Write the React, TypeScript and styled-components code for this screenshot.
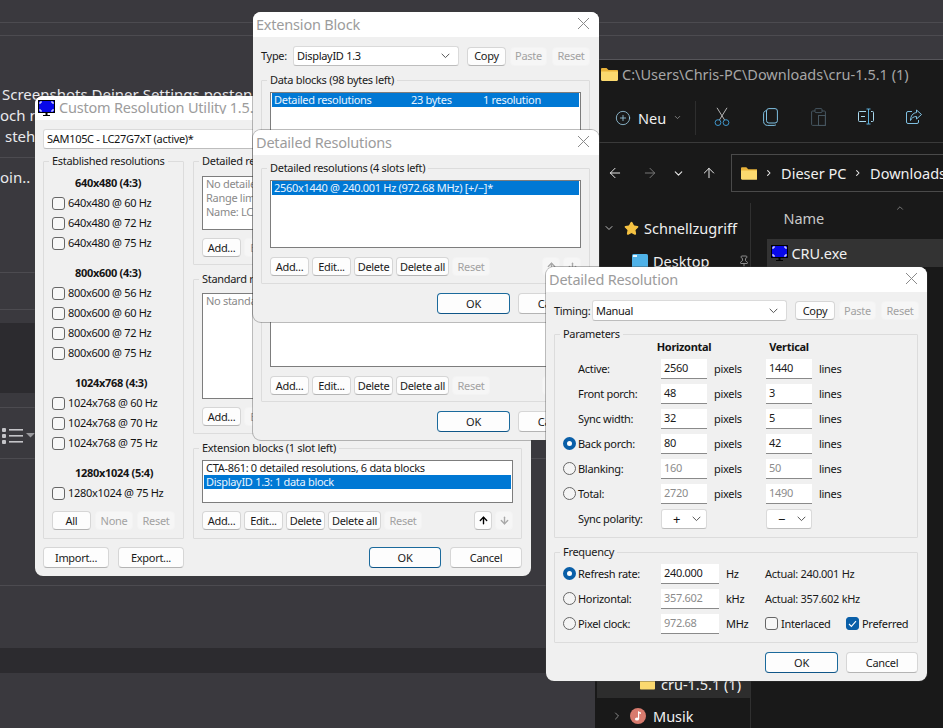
import React from "react";
import styled, { createGlobalStyle } from "styled-components";
import {
  ArrowLeft,
  ArrowRight,
  ArrowUp,
  ArrowDown,
  ChevronDown,
  ChevronRight,
  ChevronUp,
  CirclePlus,
  Pin,
  Star,
} from "lucide-react";

const UI_FONT = `"Noto Sans", "Open Sans", sans-serif`;

const GlobalStyle = createGlobalStyle`
  * { box-sizing: border-box; }
  html, body { margin: 0; padding: 0; background: #3a393e; }
  body { font-family: ${UI_FONT}; }
`;

const MonitorIcon = () => (
  <svg width="17" height="16" viewBox="0 0 17 16">
    <rect x="0.5" y="0.5" width="16" height="12" fill="#0808e8" stroke="#000" />
    <path d="M2 4V2h2M13 2h2v2M2 9v2h2M13 11h2V9" fill="none" stroke="#fff" strokeWidth="1" />
    <rect x="7.5" y="13" width="2" height="2" fill="#000" />
    <rect x="5" y="15" width="7" height="1" fill="#000" />
  </svg>
);

const FolderIcon = ({ w = 17 }: { w?: number }) => (
  <svg width={w} height={(w * 13) / 17} viewBox="0 0 17 13">
    <path d="M0 1.2C0 .5.5 0 1.2 0h4.3l2 2H16c.6 0 1 .4 1 1v1H0z" fill="#e8b23a" />
    <path d="M0 3.4h17v8.4c0 .7-.5 1.2-1.2 1.2H1.2C.5 13 0 12.5 0 11.8z" fill="#fbd96f" />
  </svg>
);

const ListIcon = () => (
  <svg width="34" height="17" viewBox="0 0 34 17">
    <g fill="#c4c4c8">
      <rect x="1" y="1" width="4" height="4" rx="1" />
      <rect x="1" y="7" width="4" height="4" rx="1" />
      <rect x="1" y="13" width="4" height="4" rx="1" />
      <rect x="8" y="2" width="14" height="1.6" />
      <rect x="8" y="8" width="14" height="1.6" />
      <rect x="8" y="14" width="14" height="1.6" />
    </g>
    <path d="M25 6h9l-4.5 4.5z" fill="#98989c" />
  </svg>
);

const SelectChevron = () => (
  <svg width="9" height="6" viewBox="0 0 9 6">
    <path d="M.7.8 4.5 4.6 8.3.8" fill="none" stroke="#555" strokeWidth="1" />
  </svg>
);

const CloseIcon = () => (
  <svg width="13" height="13" viewBox="0 0 13 13">
    <path d="M1 1l11 11M12 1 1 12" stroke="#8a8a8a" strokeWidth="1" fill="none" />
  </svg>
);

const ScissorsIcon = () => (
  <svg width="16" height="20" viewBox="0 0 16 20" fill="none" strokeWidth="1">
    <path d="M3 .8 10.6 13M13 .8 5.4 13" stroke="#b4b4b4" />
    <circle cx="4" cy="15.6" r="2.9" stroke="#3f97cc" />
    <circle cx="12" cy="15.6" r="2.9" stroke="#3f97cc" />
  </svg>
);

const CopyIcon = () => (
  <svg width="15" height="18" viewBox="0 0 15 18" fill="none" stroke="#7fc0e2" strokeWidth="1">
    <rect x="3.5" y="0.6" width="10.9" height="14.4" rx="2.4" />
    <path d="M3.4 2.6C1.6 3 .6 4 .6 5.8v7.6c0 2.4 1.6 4 4 4h6.6c.8 0 1.4-.3 1.8-.8" />
  </svg>
);

const PasteIcon = () => (
  <svg width="15" height="18" viewBox="0 0 15 18" fill="none" stroke="#465660" strokeWidth="1">
    <path d="M4 3H1.6a1 1 0 0 0-1 1v12.4a1 1 0 0 0 1 1h11.8a1 1 0 0 0 1-1V4a1 1 0 0 0-1-1H11" />
    <rect x="4" y="0.6" width="7" height="4" rx="1" />
    <rect x="7.5" y="7.5" width="6.9" height="10" />
  </svg>
);

const RenameIcon = () => (
  <svg width="18" height="18" viewBox="0 0 18 18" fill="none" stroke="#a8d8ee" strokeWidth="1">
    <path d="M9 3.5H2.5a1 1 0 0 0-1 1v8a1 1 0 0 0 1 1H9" />
    <path d="M14 3.5h1.5a1 1 0 0 1 1 1v8a1 1 0 0 1-1 1H14" />
    <path d="M11.5 1v15M9.5 1h4M9.5 16h4" stroke="#5cb0dc" />
    <path d="M4 8.5h4" />
  </svg>
);

const ShareIcon = () => (
  <svg width="18" height="18" viewBox="0 0 18 18" fill="none" stroke="#7fc0e2" strokeWidth="1">
    <path d="M7 3.5H3a1.5 1.5 0 0 0-1.5 1.5v9A1.5 1.5 0 0 0 3 15.5h9a1.5 1.5 0 0 0 1.5-1.5v-2" />
    <path d="M11.5 2 16.5 6.5 11.5 11V8.5C8.5 8.5 6.5 10 5.5 12.5 5.5 8 8 4.8 11.5 4.6z" />
  </svg>
);

const DesktopIcon = () => (
  <svg width="16" height="14" viewBox="0 0 16 14">
    <rect width="16" height="14" rx="1.5" fill="#4fb2e8" />
    <rect x="1" y="1" width="4" height="2" fill="#e4f6ff" />
  </svg>
);

const MusicIcon = () => (
  <svg width="16" height="16" viewBox="0 0 16 16">
    <circle cx="8" cy="8" r="8" fill="#d87b6e" />
    <rect x="8" y="3.5" width="1.2" height="7.5" fill="#fff" />
    <path d="M8 3.5l3 1v1.6L8 5z" fill="#fff" />
    <ellipse cx="7" cy="11" rx="2.1" ry="1.6" fill="#fff" />
  </svg>
);

const Desktop = styled.div`
  position: relative;
  width: 943px;
  height: 728px;
  overflow: hidden;
  background: #3a393e;
  color: #141414;
`;

/* forum page behind the windows */
const ForumPage = styled.div`
  display: flex;
  flex-direction: column;
  width: 100%;
  height: 100%;
  color: #e9e9ec;
`;

const ForumRow = styled.div<{ $h: number; $dark?: boolean; $line?: boolean }>`
  flex: none;
  height: ${(p) => p.$h}px;
  background: ${(p) => (p.$dark ? "#2c2b2f" : "transparent")};
  border-bottom: ${(p) => (p.$line ? "1px solid #4c4b50" : "none")};
`;

const ForumText = styled.div`
  padding-top: 48px;
  font-size: 15px;
  line-height: 21px;
`;

const ForumLine = styled.div<{ $x: number; $gap?: number }>`
  padding-left: ${(p) => p.$x}px;
  margin-top: ${(p) => p.$gap ?? 0}px;
  white-space: nowrap;
`;

const ForumTools = styled.div`
  display: flex;
  align-items: center;
  height: 100%;
  padding: 5px 0 0 1px;
`;

/* explorer window */
const Explorer = styled.div`
  position: absolute;
  left: 595px;
  top: 59px;
  width: 348px;
  height: 669px;
  display: flex;
  flex-direction: column;
  background: #191919;
  border-top: 1px solid #56555a;
  color: #f0f0f0;
  font-size: 14.5px;
`;

const ExplorerTitle = styled.div`
  display: flex;
  align-items: center;
  gap: 4px;
  height: 28px;
  padding-left: 6px;
  color: #a6a6a6;
  white-space: nowrap;
`;

const Toolbar = styled.div`
  display: flex;
  align-items: center;
  height: 55px;
  padding: 5px 0 0 20px;
  border-bottom: 1px solid #3a3a3a;
`;

const NewButton = styled.div`
  display: flex;
  align-items: center;
  gap: 7px;
  width: 81px;
  height: 34px;
  margin-right: 2px;
  border-right: 1px solid #2e2e2e;
`;

const ToolIcon = styled.div`
  display: flex;
  justify-content: center;
  width: 48px;
  margin-top: -2px;
`;

const NavBar = styled.div`
  display: flex;
  align-items: center;
  height: 60px;
  padding-left: 12px;
`;

const NavIcon = styled.div<{ $dim?: boolean; $w: number }>`
  display: flex;
  width: ${(p) => p.$w}px;
  color: ${(p) => (p.$dim ? "#777" : "#e8e8e8")};
`;

const AddressBox = styled.div`
  display: flex;
  align-items: center;
  gap: 7px;
  flex: 1;
  height: 38px;
  margin-right: -4px;
  padding-left: 9px;
  border: 1px solid #4a4a4a;
  white-space: nowrap;
  overflow: hidden;
`;

const ExplorerMain = styled.div`
  display: flex;
  flex: 1;
  min-height: 0;
`;

const Sidebar = styled.div`
  display: flex;
  flex-direction: column;
  justify-content: space-between;
  width: 157px;
  padding: 11px 0 0 2px;
  margin-bottom: -2px;
  border-right: 1px solid #303030;
`;

const SideGroup = styled.div<{ $gap: number }>`
  display: flex;
  flex-direction: column;
  gap: ${(p) => p.$gap}px;
`;

const SideItem = styled.div<{ $x: number; $gap?: number; $active?: boolean }>`
  display: flex;
  align-items: center;
  gap: ${(p) => p.$gap ?? 5}px;
  height: 28px;
  padding-left: ${(p) => p.$x}px;
  background: ${(p) => (p.$active ? "#2d2d2d" : "transparent")};
  white-space: nowrap;
`;

const StarIcon = styled(Star)`
  margin-left: 4px;
  fill: #f5c242;
  color: #f5c242;
`;

const PinIcon = styled(Pin)`
  margin-left: 24px;
  color: #8a8a8a;
`;

const FileList = styled.div`
  flex: 1;
  padding-left: 16px;
`;

const SortCaret = styled.div`
  display: flex;
  justify-content: center;
  width: 266px;
  height: 3px;
  color: #8a8a8a;
`;

const NameHeader = styled.div`
  height: 25px;
  padding-left: 16px;
  line-height: 25px;
  color: #c8c8c8;
`;

const FileRow = styled.div`
  display: flex;
  align-items: center;
  gap: 3px;
  height: 28px;
  margin-top: 8px;
  padding-left: 4px;
  background: #333;
`;

/* win32 dialog parts */
const Win = styled.div<{ $x: number; $y: number; $w: number; $z: number }>`
  position: absolute;
  left: ${(p) => p.$x}px;
  top: ${(p) => p.$y}px;
  width: ${(p) => p.$w}px;
  z-index: ${(p) => p.$z};
  display: flex;
  flex-direction: column;
  border-radius: 8px;
  background: #f0f0f0;
  box-shadow: 0 0 0 1px rgba(60, 60, 60, 0.35);
  overflow: hidden;
  font-size: 11px;
  line-height: 14px;
  letter-spacing: -0.3px;
`;

const TitleBar = styled.div<{ $h?: number }>`
  display: flex;
  align-items: center;
  height: ${(p) => p.$h ?? 25}px;
  padding: 0 9px 2px 3px;
  background: #fff;
  color: #9c9c9c;
  font-size: 14.5px;
  letter-spacing: -0.2px;
  white-space: nowrap;
`;

const TitleIcon = styled.div`
  display: flex;
  margin: 2px 4px 0 0;
`;

const TitleText = styled.div`
  flex: 1;
  overflow: hidden;
`;

const Body = styled.div<{ $top: number }>`
  display: flex;
  flex-direction: column;
  padding: ${(p) => p.$top}px 9px 8px 8px;
`;

const Row = styled.div<{ $top?: number; $gap?: number }>`
  display: flex;
  align-items: center;
  gap: ${(p) => p.$gap ?? 4}px;
  margin-top: ${(p) => p.$top ?? 0}px;
`;

const Columns = styled.div`
  display: flex;
  gap: 9px;
  margin-top: 5px;
`;

const Stack = styled.div`
  display: flex;
  flex-direction: column;
  flex: 1;
  min-width: 0;
  gap: 6px;
`;

const Group = styled.fieldset<{ $w?: number; $pad?: string; $top?: number }>`
  width: ${(p) => (p.$w ? `${p.$w}px` : "auto")};
  min-width: 0;
  margin: ${(p) => p.$top ?? 0}px 0 0;
  padding: ${(p) => p.$pad ?? "7px 8px 7px 8px"};
  border: 1px solid #dcdcdc;
  border-radius: 1px;
`;

const Legend = styled.legend`
  margin-left: -3px;
  padding: 0 3px;
  font-size: 11px;
  line-height: 14px;
  color: #1a1a1a;
  white-space: nowrap;
`;

const Label = styled.div<{ $w?: number }>`
  flex: none;
  width: ${(p) => (p.$w ? `${p.$w}px` : "auto")};
  color: #1a1a1a;
  white-space: nowrap;
`;

const Btn = styled.button<{ $w: number; $h?: number; $primary?: boolean; $ml?: number }>`
  flex: none;
  width: ${(p) => p.$w}px;
  height: ${(p) => p.$h ?? 19}px;
  margin-left: ${(p) => p.$ml ?? 0}px;
  padding: 0;
  font: inherit;
  letter-spacing: inherit;
  color: #1a1a1a;
  background: #fdfdfd;
  border: 1px solid ${(p) => (p.$primary ? "#1b6a9c" : "#d6d6d6")};
  border-bottom-color: ${(p) => (p.$primary ? "#0f5688" : "#b4b4b4")};
  border-radius: 4px;

  &:disabled {
    color: #a2a2a2;
    background: #f6f6f6;
    border-color: #f3f3f3;
  }
`;

const ArrowBtn = styled(Btn)`
  display: flex;
  align-items: center;
  justify-content: center;
`;

const RowEnd = styled.div<{ $gap?: number }>`
  margin-left: auto;
  display: flex;
  gap: ${(p) => p.$gap ?? 3}px;
`;

const Combo = styled.div<{ $w: number; $h?: number }>`
  display: flex;
  align-items: center;
  justify-content: space-between;
  flex: none;
  width: ${(p) => p.$w}px;
  height: ${(p) => p.$h ?? 20}px;
  padding: 0 8px 0 3px;
  background: #fff;
  border: 1px solid #dadada;
  border-bottom-color: #bdbdbd;
  border-radius: 3px;
  white-space: nowrap;
`;

const ListBox = styled.div<{ $h: number }>`
  height: ${(p) => p.$h}px;
  padding: 0 1px;
  background: #fff;
  border: 1px solid #7d7d7d;
  overflow: hidden;
  white-space: nowrap;
`;

const ListItem = styled.div<{ $selected?: boolean; $dim?: boolean }>`
  display: flex;
  height: 14px;
  padding-left: 2px;
  line-height: 14px;
  background: ${(p) => (p.$selected ? "#0078d4" : "transparent")};
  color: ${(p) => (p.$selected ? "#e8f4ff" : p.$dim ? "#8a8a8a" : "#1a1a1a")};
`;

const ListCell = styled.div<{ $w: number }>`
  width: ${(p) => p.$w}px;
`;

const ResHeading = styled.div<{ $top?: number }>`
  height: 20px;
  margin-top: ${(p) => p.$top ?? 0}px;
  padding-left: 23px;
  line-height: 20px;
  font-weight: 700;
  white-space: nowrap;
`;

const CheckRow = styled.div<{ $w?: number }>`
  display: flex;
  align-items: center;
  gap: 3px;
  height: 20px;
  flex: none;
  width: ${(p) => (p.$w ? `${p.$w}px` : "auto")};
  white-space: nowrap;
`;

const CheckBox = styled.span<{ $on?: boolean }>`
  display: inline-flex;
  align-items: center;
  justify-content: center;
  flex: none;
  width: 13px;
  height: 13px;
  background: ${(p) => (p.$on ? "#0a5fa8" : "#f7f7f7")};
  border: 1px solid ${(p) => (p.$on ? "#0a5fa8" : "#666")};
  border-radius: 3px;
`;

const Radio = styled.span<{ $on?: boolean }>`
  display: inline-block;
  flex: none;
  width: 13px;
  height: 13px;
  border-radius: 50%;
  background: ${(p) => (p.$on ? "#fff" : "#f4f4f4")};
  border: ${(p) => (p.$on ? "4px solid #0a5fa8" : "1px solid #666")};
`;

const ParamGrid = styled.div`
  display: grid;
  grid-template-columns: 98px 46px 59px 46px 1fr;
  grid-auto-rows: 25px;
  align-items: center;
`;

const FreqGrid = styled.div`
  display: grid;
  grid-template-columns: 98px 58px 46px 1fr;
  grid-auto-rows: 25px;
  align-items: center;
`;

const HeadRow = styled.div`
  display: grid;
  grid-template-columns: 98px 46px 59px 46px;
  height: 15px;
  font-weight: 700;
  line-height: 11px;
  white-space: nowrap;
`;

const HeadCell = styled.div<{ $col: number }>`
  grid-column: ${(p) => p.$col};
  display: flex;
  justify-content: center;
`;

const RowLabel = styled.div`
  display: flex;
  align-items: center;
  gap: 2px;
  padding-left: 15px;
  white-space: nowrap;
`;

const RadioLabel = styled(RowLabel)`
  padding-left: 0;
`;

const Field = styled.div<{ $dim?: boolean }>`
  display: flex;
  align-items: center;
  height: 20px;
  padding-left: 3px;
  background: #fff;
  border-bottom: 1px solid #8a8a8a;
  color: ${(p) => (p.$dim ? "#8c8c8c" : "#1a1a1a")};
`;

const Unit = styled.div`
  padding-left: 7px;
  white-space: nowrap;
`;

const PolarityCombo = styled(Combo)`
  padding: 0 5px 0 11px;
  font-size: 13px;
`;

const FreqOptions = styled.div`
  display: flex;
  align-items: center;
`;

const resolutionGroups: { title: string; modes: string[] }[] = [
  { title: "640x480 (4:3)", modes: ["640x480 @ 60 Hz", "640x480 @ 72 Hz", "640x480 @ 75 Hz"] },
  {
    title: "800x600 (4:3)",
    modes: ["800x600 @ 56 Hz", "800x600 @ 60 Hz", "800x600 @ 72 Hz", "800x600 @ 75 Hz"],
  },
  { title: "1024x768 (4:3)", modes: ["1024x768 @ 60 Hz", "1024x768 @ 70 Hz", "1024x768 @ 75 Hz"] },
  { title: "1280x1024 (5:4)", modes: ["1280x1024 @ 75 Hz"] },
];

const paramRows = [
  { label: "Active:", h: "2560", v: "1440" },
  { label: "Front porch:", h: "48", v: "3" },
  { label: "Sync width:", h: "32", v: "5" },
  { label: "Back porch:", h: "80", v: "42", radio: true, on: true },
  { label: "Blanking:", h: "160", v: "50", radio: true, dim: true },
  { label: "Total:", h: "2720", v: "1490", radio: true, dim: true },
];

const ListButtons = ({ top, arrowsOn }: { top: number; arrowsOn?: boolean }) => (
  <Row $top={top} $gap={3}>
    <Btn $w={39}>Add...</Btn>
    <Btn $w={39}>Edit...</Btn>
    <Btn $w={39}>Delete</Btn>
    <Btn $w={53}>Delete all</Btn>
    <Btn $w={38} disabled>
      Reset
    </Btn>
    <RowEnd>
      <ArrowBtn $w={18} disabled={!arrowsOn}>
        <ArrowUp size={11} strokeWidth={3} color={arrowsOn ? "#000" : "#a8a8a8"} />
      </ArrowBtn>
      <ArrowBtn $w={18} disabled>
        <ArrowDown size={11} strokeWidth={3} color="#a8a8a8" />
      </ArrowBtn>
    </RowEnd>
  </Row>
);

const AddEditRow = () => (
  <Row $top={8} $gap={3}>
    <Btn $w={39}>Add...</Btn>
    <Btn $w={39} disabled>
      Edit...
    </Btn>
  </Row>
);

const DialogActions = () => (
  <Row $top={9}>
    <RowEnd $gap={8}>
      <Btn $w={73} $h={21} $primary>
        OK
      </Btn>
      <Btn $w={72} $h={21}>
        Cancel
      </Btn>
    </RowEnd>
  </Row>
);

const CopyRow = ({ label, labelW, combo, comboW, comboH, copyW }: {
  label: string;
  labelW: number;
  combo: string;
  comboW: number;
  comboH?: number;
  copyW: number;
}) => (
  <Row $gap={0}>
    <Label $w={labelW}>{label}</Label>
    <Combo $w={comboW} $h={comboH}>
      {combo}
      <SelectChevron />
    </Combo>
    <Btn $w={copyW} $ml={8}>
      Copy
    </Btn>
    <Btn $w={37} $ml={4} disabled>
      Paste
    </Btn>
    <Btn $w={38} $ml={5} disabled>
      Reset
    </Btn>
  </Row>
);

const App = () => {
  return (
    <Desktop>
      <GlobalStyle />
      <ForumPage>
        <ForumRow $h={23} $line />
        <ForumRow $h={13} $line />
        <ForumRow $h={122} $line>
          <ForumText>
            <ForumLine $x={2}>Screenshots Deiner Settings posten</ForumLine>
            <ForumLine $x={0}>och m</ForumLine>
            <ForumLine $x={5}>steh</ForumLine>
            <ForumLine $x={0} $gap={20}>
              oin..
            </ForumLine>
          </ForumText>
        </ForumRow>
        <ForumRow $h={115} $line />
        <ForumRow $h={37} $line />
        <ForumRow $h={13} />
        <ForumRow $h={70} $dark />
        <ForumRow $h={15} $line />
        <ForumRow $h={51} $line>
          <ForumTools>
            <ListIcon />
          </ForumTools>
        </ForumRow>
        <ForumRow $h={127} $line />
        <ForumRow $h={62} />
        <ForumRow $h={25} $dark />
      </ForumPage>

      <Explorer>
        <ExplorerTitle>
          <FolderIcon />
          C:\Users\Chris-PC\Downloads\cru-1.5.1 (1)
        </ExplorerTitle>
        <Toolbar>
          <NewButton>
            <CirclePlus size={16} strokeWidth={1.2} color="#9ed0ea" />
            Neu
            <ChevronDown size={9} color="#999" />
          </NewButton>
          <ToolIcon>
            <ScissorsIcon />
          </ToolIcon>
          <ToolIcon>
            <CopyIcon />
          </ToolIcon>
          <ToolIcon>
            <PasteIcon />
          </ToolIcon>
          <ToolIcon>
            <RenameIcon />
          </ToolIcon>
          <ToolIcon>
            <ShareIcon />
          </ToolIcon>
        </Toolbar>
        <NavBar>
          <NavIcon $w={35}>
            <ArrowLeft size={16} strokeWidth={1.5} />
          </NavIcon>
          <NavIcon $w={30} $dim>
            <ArrowRight size={16} strokeWidth={1.5} />
          </NavIcon>
          <NavIcon $w={29}>
            <ChevronDown size={13} strokeWidth={2} />
          </NavIcon>
          <NavIcon $w={30}>
            <ArrowUp size={16} strokeWidth={1.5} />
          </NavIcon>
          <AddressBox>
            <FolderIcon />
            <ChevronRight size={10} strokeWidth={2.5} />
            Dieser PC
            <ChevronRight size={10} strokeWidth={2.5} />
            Downloads
          </AddressBox>
        </NavBar>
        <ExplorerMain>
          <Sidebar>
            <SideGroup $gap={5}>
              <SideItem $x={6}>
                <ChevronDown size={12} strokeWidth={2} color="#bbb" />
                <StarIcon size={15} />
                Schnellzugriff
              </SideItem>
              <SideItem $x={35} $gap={5}>
                <DesktopIcon />
                Desktop
                <PinIcon size={12} />
              </SideItem>
            </SideGroup>
            <SideGroup $gap={4}>
              <SideItem $x={43} $gap={6} $active>
                <FolderIcon w={15} />
                cru-1.5.1 (1)
              </SideItem>
              <SideItem $x={14} $gap={7}>
                <ChevronRight size={12} strokeWidth={2} color="#888" />
                <MusicIcon />
                Musik
              </SideItem>
            </SideGroup>
          </Sidebar>
          <FileList>
            <SortCaret>
              <ChevronUp size={10} />
            </SortCaret>
            <NameHeader>Name</NameHeader>
            <FileRow>
              <MonitorIcon />
              CRU.exe
            </FileRow>
          </FileList>
        </ExplorerMain>
      </Explorer>

      <Win $x={35} $y={96} $w={496} $z={1}>
        <TitleBar $h={24}>
          <TitleIcon>
            <MonitorIcon />
          </TitleIcon>
          <TitleText>Custom Resolution Utility 1.5.1</TitleText>
        </TitleBar>
        <Body $top={9}>
          <Combo $w={479}>
            SAM105C - LC27G7xT (active)*
            <SelectChevron />
          </Combo>
          <Columns>
            <Group $w={141} $pad="5px 8px 8px 8px">
              <Legend>Established resolutions</Legend>
              {resolutionGroups.map((group, i) => (
                <div key={group.title}>
                  <ResHeading $top={i === 0 ? 0 : 10}>{group.title}</ResHeading>
                  {group.modes.map((mode) => (
                    <CheckRow key={mode}>
                      <CheckBox />
                      {mode}
                    </CheckRow>
                  ))}
                </div>
              ))}
              <Row $top={8}>
                <Btn $w={39}>All</Btn>
                <Btn $w={38} disabled>
                  None
                </Btn>
                <Btn $w={38} disabled>
                  Reset
                </Btn>
              </Row>
            </Group>
            <Stack>
              <Group $pad="8px 8px 7px 8px">
                <Legend>Detailed resolutions</Legend>
                <ListBox $h={54}>
                  <ListItem $dim>No detailed resolutions</ListItem>
                  <ListItem $dim>Range limits</ListItem>
                  <ListItem $dim>Name: LC27G7xT</ListItem>
                </ListBox>
                <AddEditRow />
              </Group>
              <Group $top={1}>
                <Legend>Standard resolutions</Legend>
                <ListBox $h={106}>
                  <ListItem $dim>No standard resolutions</ListItem>
                </ListBox>
                <AddEditRow />
              </Group>
              <Group $top={1} $pad="5px 8px 8px 8px">
                <Legend>Extension blocks (1 slot left)</Legend>
                <ListBox $h={43}>
                  <ListItem>CTA-861: 0 detailed resolutions, 6 data blocks</ListItem>
                  <ListItem $selected>DisplayID 1.3: 1 data block</ListItem>
                </ListBox>
                <ListButtons top={8} arrowsOn />
              </Group>
            </Stack>
          </Columns>
          <Row $top={8} $gap={9}>
            <Btn $w={66} $h={21}>
              Import...
            </Btn>
            <Btn $w={66} $h={21}>
              Export...
            </Btn>
            <RowEnd $gap={9}>
              <Btn $w={72} $h={21} $primary>
                OK
              </Btn>
              <Btn $w={72} $h={21}>
                Cancel
              </Btn>
            </RowEnd>
          </Row>
        </Body>
      </Win>

      <Win $x={253} $y={12} $w={346} $z={2}>
        <TitleBar>
          <TitleText>Extension Block</TitleText>
          <CloseIcon />
        </TitleBar>
        <Body $top={9}>
          <CopyRow label="Type:" labelW={32} combo="DisplayID 1.3" comboW={166} copyW={39} />
          <Group $pad="5px 8px 6px 8px" $top={7}>
            <Legend>Data blocks (98 bytes left)</Legend>
            <ListBox $h={275}>
              <ListItem $selected>
                <ListCell $w={137}>Detailed resolutions</ListCell>
                <ListCell $w={72}>23 bytes</ListCell>
                <ListCell $w={80}>1 resolution</ListCell>
              </ListItem>
            </ListBox>
            <ListButtons top={9} />
          </Group>
          <DialogActions />
        </Body>
      </Win>

      <Win $x={253} $y={130} $w={346} $z={3}>
        <TitleBar>
          <TitleText>Detailed Resolutions</TitleText>
          <CloseIcon />
        </TitleBar>
        <Body $top={6}>
          <Group $pad="5px 8px 7px 8px">
            <Legend>Detailed resolutions (4 slots left)</Legend>
            <ListBox $h={68}>
              <ListItem $selected>2560x1440 @ 240.001 Hz (972.68 MHz) [+/−]*</ListItem>
            </ListBox>
            <ListButtons top={9} />
          </Group>
          <DialogActions />
        </Body>
      </Win>

      <Win $x={546} $y={267} $w={381} $z={4}>
        <TitleBar>
          <TitleText>Detailed Resolution</TitleText>
          <CloseIcon />
        </TitleBar>
        <Body $top={8}>
          <CopyRow label="Timing:" labelW={38} combo="Manual" comboW={195} comboH={21} copyW={40} />
          <Group $pad="0 8px 6px 8px" $top={6}>
            <Legend>Parameters</Legend>
            <HeadRow>
              <HeadCell $col={2}>Horizontal</HeadCell>
              <HeadCell $col={4}>Vertical</HeadCell>
            </HeadRow>
            <ParamGrid>
              {paramRows.map((row) => (
                <React.Fragment key={row.label}>
                  {row.radio ? (
                    <RadioLabel>
                      <Radio $on={row.on} />
                      {row.label}
                    </RadioLabel>
                  ) : (
                    <RowLabel>{row.label}</RowLabel>
                  )}
                  <Field $dim={row.dim}>{row.h}</Field>
                  <Unit>pixels</Unit>
                  <Field $dim={row.dim}>{row.v}</Field>
                  <Unit>lines</Unit>
                </React.Fragment>
              ))}
              <RowLabel>Sync polarity:</RowLabel>
              <PolarityCombo $w={46}>
                +
                <SelectChevron />
              </PolarityCombo>
              <span />
              <PolarityCombo $w={46}>
                −
                <SelectChevron />
              </PolarityCombo>
            </ParamGrid>
          </Group>
          <Group $pad="2px 8px 6px 8px" $top={7}>
            <Legend>Frequency</Legend>
            <FreqGrid>
              <RadioLabel>
                <Radio $on />
                Refresh rate:
              </RadioLabel>
              <Field>240.000</Field>
              <Unit>Hz</Unit>
              <Label>Actual: 240.001 Hz</Label>
              <RadioLabel>
                <Radio />
                Horizontal:
              </RadioLabel>
              <Field $dim>357.602</Field>
              <Unit>kHz</Unit>
              <Label>Actual: 357.602 kHz</Label>
              <RadioLabel>
                <Radio />
                Pixel clock:
              </RadioLabel>
              <Field $dim>972.68</Field>
              <Unit>MHz</Unit>
              <FreqOptions>
                <CheckRow $w={81}>
                  <CheckBox />
                  Interlaced
                </CheckRow>
                <CheckRow>
                  <CheckBox $on>
                    <svg width="9" height="8" viewBox="0 0 9 8">
                      <path d="M1 4l2.4 2.4L8 1.2" fill="none" stroke="#fff" strokeWidth="1.1" />
                    </svg>
                  </CheckBox>
                  Preferred
                </CheckRow>
              </FreqOptions>
            </FreqGrid>
          </Group>
          <DialogActions />
        </Body>
      </Win>
    </Desktop>
  );
};

export default App;
